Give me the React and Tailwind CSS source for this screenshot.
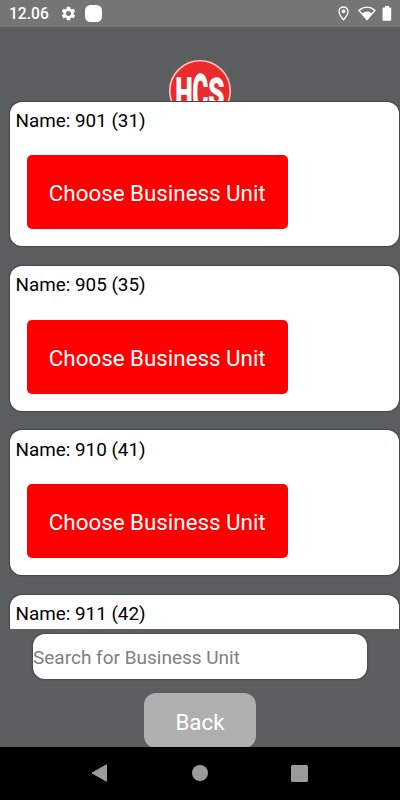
import React from "react";

const units = ["901 (31)", "905 (35)", "910 (41)", "911 (42)"];

function StatusBar() {
  return (
    <header className="flex h-[27px] shrink-0 items-center bg-[#757575] pl-[9px] pr-[8.5px] text-white">
      <span className="w-[41px] pt-[2px] text-[15.6px] leading-[27px] font-medium">12.06</span>
      <svg className="ml-[10px]" width="17" height="17" viewBox="0 0 24 24" fill="currentColor">
        <path d="M19.14 12.94c.04-.3.06-.61.06-.94 0-.32-.02-.64-.07-.94l2.03-1.58a.49.49 0 0 0 .12-.61l-1.92-3.32a.488.488 0 0 0-.59-.22l-2.39.96c-.5-.38-1.03-.7-1.62-.94l-.36-2.54a.484.484 0 0 0-.48-.41h-3.84c-.24 0-.43.17-.47.41l-.36 2.54c-.59.24-1.13.57-1.62.94l-2.39-.96c-.22-.08-.47 0-.59.22L2.74 8.87c-.12.21-.08.47.12.61l2.03 1.58c-.05.3-.09.63-.09.94s.02.64.07.94l-2.03 1.58a.49.49 0 0 0-.12.61l1.92 3.32c.12.22.37.29.59.22l2.39-.96c.5.38 1.03.7 1.62.94l.36 2.54c.05.24.24.41.48.41h3.84c.24 0 .44-.17.47-.41l.36-2.54c.59-.24 1.13-.56 1.62-.94l2.39.96c.22.08.47 0 .59-.22l1.92-3.32c.12-.22.07-.47-.12-.61l-2.01-1.58zM12 15.6c-1.98 0-3.6-1.62-3.6-3.6s1.62-3.6 3.6-3.6 3.6 1.62 3.6 3.6-1.62 3.6-3.6 3.6z" />
      </svg>
      <span className="ml-[8px] size-[17px] rounded-[5.5px] bg-white" />
      <svg className="ml-auto" width="11" height="15" viewBox="0 0 11 15" fill="none">
        <path d="M5.5 1C2.9 1 1 2.9 1 5.4 1 8.6 5.5 13.8 5.5 13.8S10 8.6 10 5.4C10 2.9 8.1 1 5.5 1Z" stroke="currentColor" strokeWidth="1.3" />
        <circle cx="5.5" cy="5.3" r="1.9" fill="currentColor" />
      </svg>
      <svg className="ml-[9.5px]" width="18" height="15" viewBox="0 0 18 15">
        <path d="M1 4.4Q9-2.1 17 4.4L9 13.6Z" fill="none" stroke="currentColor" strokeWidth="1.4" strokeLinejoin="round" />
        <path d="M4 7.2Q9 4 14 7.2L9 14Z" fill="currentColor" />
      </svg>
      <svg className="ml-[5.5px]" width="10" height="15" viewBox="0 0 10 15" fill="currentColor">
        <path d="M3 0h4v1.4h1.2q1 0 1 1v11.4q0 1-1 1H1.5q-1 0-1-1V2.4q0-1 1-1H3Z" />
      </svg>
    </header>
  );
}

function Logo() {
  return (
    <svg className="mt-[32px] mr-[1px] block shrink-0" width="64" height="64" viewBox="0 0 64 64">
      <circle cx="32" cy="32" r="31.2" fill="#e83438" />
      <circle cx="32" cy="32" r="30.2" fill="#ea2a2c" stroke="#f8c4c4" strokeWidth="1.6" />
      <g fill="#fff" stroke="#fff" strokeWidth="1.3" fontFamily="Roboto, sans-serif" fontWeight="700">
        <text x="7.5" y="47" fontSize="38" textLength="17" lengthAdjust="spacingAndGlyphs">H</text>
        <text x="24.6" y="51" fontSize="50" textLength="15.5" lengthAdjust="spacingAndGlyphs">C</text>
        <text x="40.6" y="47" fontSize="38" textLength="15.5" lengthAdjust="spacingAndGlyphs">S</text>
      </g>
    </svg>
  );
}

function UnitCard({ name }) {
  return (
    <article className="h-[144.7px] w-[389px] shrink-0 rounded-[12px] bg-white pt-[7.4px] shadow-[0_0_1px_0.5px_rgba(0,0,0,0.25)]">
      <p className="pl-[5.5px] text-[18.85px] leading-[25px] text-black">Name: {name}</p>
      <button className="mt-[21.3px] ml-[17px] block h-[74px] w-[260.5px] rounded-[5px] bg-[#ff0000] pt-[1.8px] text-[22.35px] leading-[26px] text-white">
        Choose Business Unit
      </button>
    </article>
  );
}

export default function App() {
  return (
    <div className="flex h-[800px] w-[400px] flex-col overflow-hidden bg-[#5a5e5e] font-['Roboto',sans-serif]">
      <StatusBar />
      <div className="flex h-[74px] shrink-0 justify-center overflow-hidden">
        <Logo />
      </div>
      <main className="flex h-[528px] shrink-0 flex-col gap-[19.8px] overflow-hidden pt-[0.5px] pl-[10px]">
        {units.map((name) => (
          <UnitCard key={name} name={name} />
        ))}
      </main>
      <input
        className="mt-[5.4px] ml-[33px] h-[44.6px] w-[334px] shrink-0 rounded-[12px] bg-white pt-[2px] text-[19px] text-black shadow-[0_0_1px_0.5px_rgba(0,0,0,0.2)] outline-none placeholder:text-[#808080]"
        placeholder="Search for Business Unit"
      />
      <div className="mt-[14px] flex h-[54px] shrink-0 justify-center overflow-hidden">
        <button className="h-[55px] w-[111.5px] rounded-[12px] bg-[#afafaf] pt-[3px] text-[22.35px] leading-[26px] text-white">
          Back
        </button>
      </div>
      <nav className="flex grow items-center justify-center gap-[83.5px] bg-black pr-[1px] text-[#9b9b9b]">
        <svg width="17" height="18" viewBox="0 0 17 18" fill="currentColor">
          <path d="M15.5 0.8V17.2L1 9Z" stroke="currentColor" strokeWidth="1" strokeLinejoin="round" />
        </svg>
        <span className="size-[16px] rounded-full bg-[#9b9b9b]" />
        <span className="size-[17px] rounded-[1.5px] bg-[#9b9b9b]" />
      </nav>
    </div>
  );
}
